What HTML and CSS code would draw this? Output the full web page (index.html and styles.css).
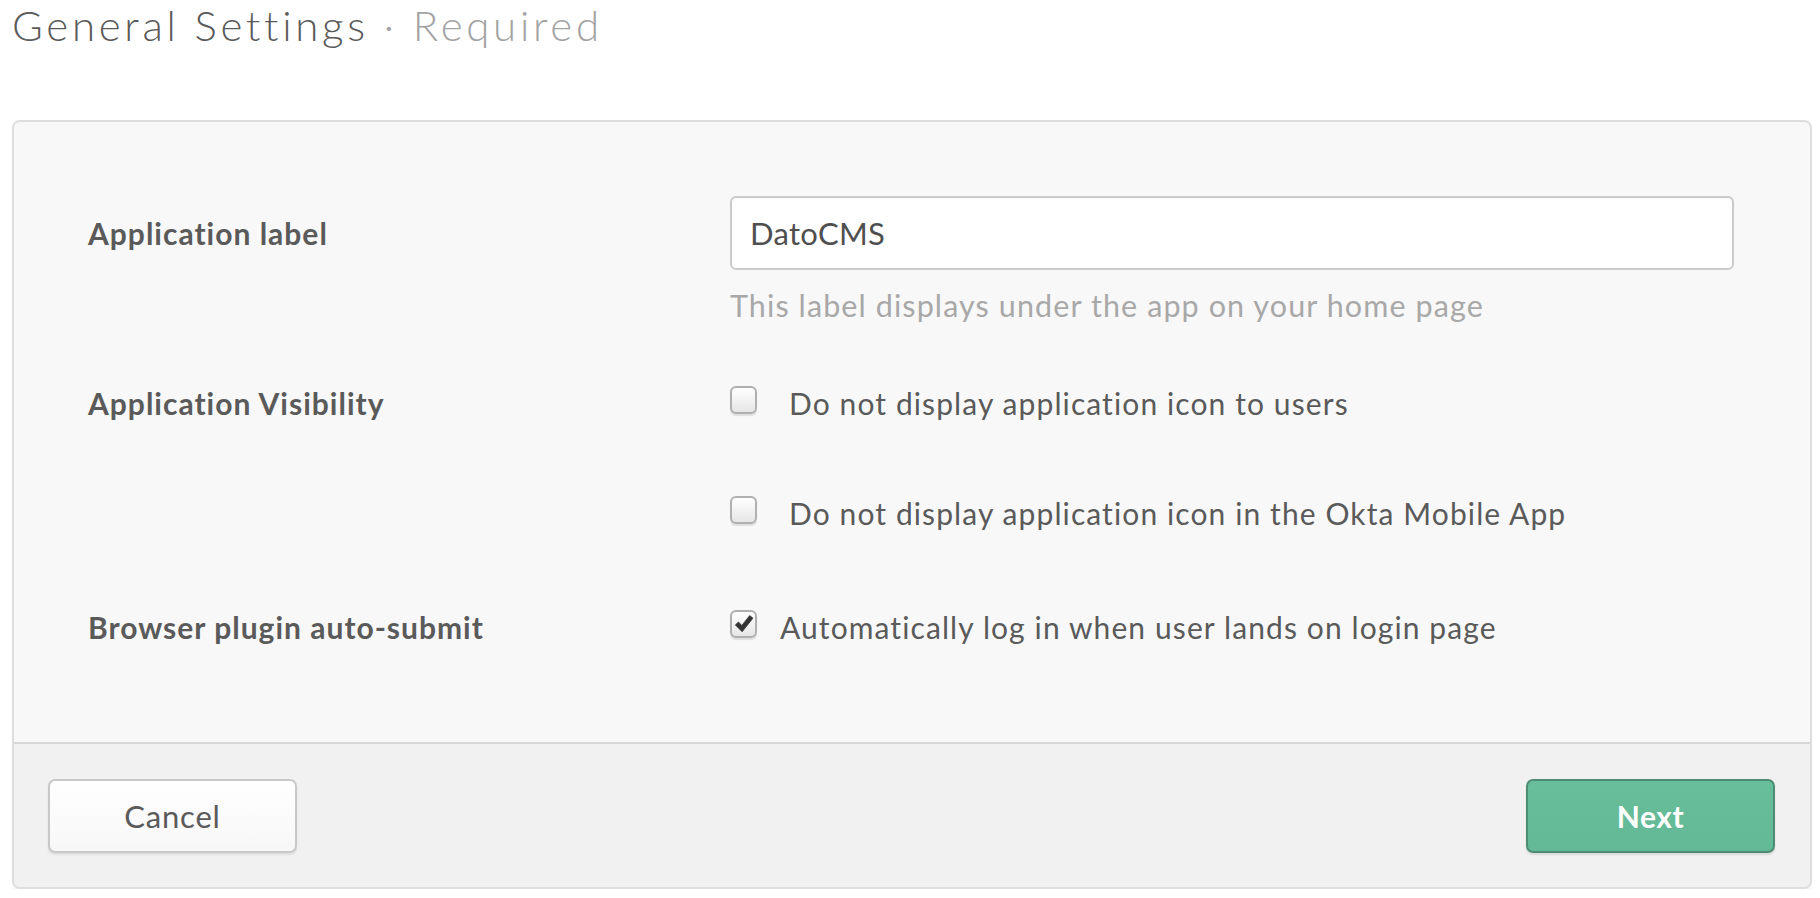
FILE: index.html
```html
<!DOCTYPE html>
<html>
<head>
<meta charset="utf-8">
<link rel="stylesheet" href="styles.css">
</head>
<body>
<h1 class="title">General Settings <span class="title-sub">· Required</span></h1>
<div class="panel">
  <div class="panel-body">
    <div class="row row-label">
      <div class="label">Application label</div>
      <div class="field">
        <div class="input">DatoCMS</div>
        <div class="hint">This label displays under the app on your home page</div>
      </div>
    </div>
    <div class="row row-visibility">
      <div class="label">Application Visibility</div>
      <div class="field">
        <div class="option"><span class="checkbox"></span><span class="option-text">Do not display application icon to users</span></div>
        <div class="option option-second"><span class="checkbox"></span><span class="option-text">Do not display application icon in the Okta Mobile App</span></div>
      </div>
    </div>
    <div class="row row-submit">
      <div class="label">Browser plugin auto-submit</div>
      <div class="field">
        <div class="option"><span class="checkbox checked"><svg viewBox="0 0 24 24" width="22" height="22"><path d="M2.5 13 L6 9.8 L9.6 13.6 L18.2 2.8 L21.8 5.6 L10 20.5 Z" fill="#333333" stroke="#333333" stroke-width="0.8" stroke-linejoin="round"/></svg></span><span class="option-text option-text-checked">Automatically log in when user lands on login page</span></div>
      </div>
    </div>
  </div>
  <div class="panel-footer">
    <button class="btn btn-cancel">Cancel</button>
    <button class="btn btn-next">Next</button>
  </div>
</div>
</body>
</html>
```
FILE: styles.css
```css
html, body {
  margin: 0;
  padding: 0;
  background: #ffffff;
}
body {
  font-family: "Lato", "Liberation Sans", sans-serif;
  color: #5d5d5d;
  width: 1820px;
}
.title {
  margin: 0 0 69px 12px;
  font-size: 42px;
  font-weight: 300;
  letter-spacing: 3.7px;
  line-height: 51px;
  color: #5a5a5a;
}
.title-sub {
  color: #a3a3a3;
}
.panel {
  margin-left: 12px;
  width: 1796px;
  border: 2px solid #dedede;
  border-radius: 8px;
  background: #f8f8f8;
  box-shadow: 0 2px 2px rgba(0,0,0,0.05);
  overflow: hidden;
}
.panel-body {
  padding: 74px 76px 98px 74px;
}
.row {
  display: grid;
  grid-template-columns: 642px 1fr;
}
.label {
  font-size: 30px;
  font-weight: 700;
  letter-spacing: 1px;
  color: #5a5a5a;
  line-height: 34px;
}
.row-label .label {
  margin-top: 20px;
}
.input {
  box-sizing: border-box;
  height: 74px;
  border: 2px solid #cbcbcb;
  border-radius: 6px;
  background: #fff;
  font-size: 31px;
  letter-spacing: 0.3px;
  line-height: 70px;
  padding-left: 18px;
  color: #4f4f4f;
  box-shadow: inset 0 1px 2px rgba(0,0,0,0.04);
}
.hint {
  margin-top: 18px;
  font-size: 30.5px;
  letter-spacing: 1.1px;
  line-height: 34px;
  color: #a8a8a8;
}
.row-visibility {
  margin-top: 64px;
}
.row-submit {
  margin-top: 80px;
}
.option {
  display: flex;
  align-items: center;
  height: 34px;
}
.option-second {
  margin-top: 76px;
}
.checkbox {
  box-sizing: border-box;
  width: 27px;
  height: 28px;
  border: 2px solid #b0b0b0;
  border-radius: 6px;
  background: linear-gradient(#ffffff, #e6e6e6);
  box-shadow: 0 2px 1px rgba(0,0,0,0.10);
  display: flex;
  align-items: center;
  justify-content: center;
  margin-top: -6px;
  flex: none;
}
.option-text {
  font-size: 30px;
  letter-spacing: 1.1px;
  line-height: 34px;
  margin-left: 32px;
  color: #5a5a5a;
}
.option-text-checked {
  margin-left: 23px;
}
.panel-footer {
  background: #f1f1f1;
  border-top: 2px solid #d6d6d6;
  display: flex;
  justify-content: space-between;
  align-items: center;
  padding: 35px 35px 34px 34px;
}
.btn {
  width: 249px;
  height: 74px;
  border-radius: 7px;
  font-family: "Lato", "Liberation Sans", sans-serif;
  font-size: 31px;
  letter-spacing: 0.8px;
  cursor: pointer;
}
.btn-cancel {
  background: linear-gradient(#ffffff, #f7f7f7);
  border: 2px solid #c8c8c8;
  color: #5a5a5a;
  box-shadow: 0 2px 2px rgba(0,0,0,0.08);
}
.btn-next {
  background: linear-gradient(#68bd9b, #63b895);
  border: 2px solid #4e8d74;
  color: #ffffff;
  font-size: 30px;
  letter-spacing: 0.5px;
  font-weight: 700;
  box-shadow: 0 2px 2px rgba(0,0,0,0.1);
}
```
